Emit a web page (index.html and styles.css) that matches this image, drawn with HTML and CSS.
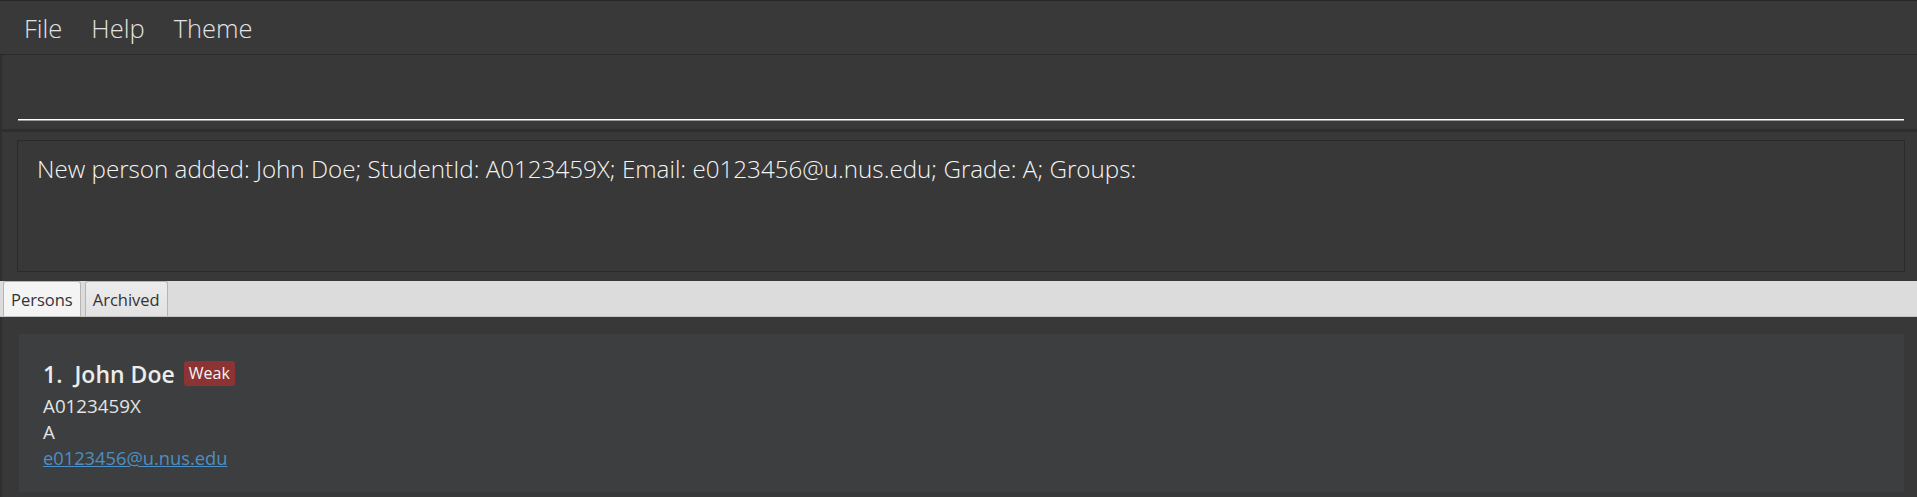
FILE: index.html
```html
<!DOCTYPE html>
<html>
<head>
<meta charset="utf-8">
<link rel="stylesheet" href="styles.css">
</head>
<body>
<div class="app">
  <div class="menubar">
    <span class="menu-item">File</span>
    <span class="menu-item">Help</span>
    <span class="menu-item">Theme</span>
  </div>
  <div class="command-box">
    <div class="command-field"></div>
  </div>
  <div class="result-pane">
    <div class="result-box">New person added: John Doe; StudentId: A0123459X; Email: e0123456@u.nus.edu; Grade: A; Groups:</div>
  </div>
  <div class="tab-header">
    <div class="tab tab-selected">Persons</div>
    <div class="tab">Archived</div>
  </div>
  <div class="tab-content">
    <div class="card">
      <div class="card-title">
        <span class="card-index">1.</span>
        <span class="card-name">John Doe</span>
        <span class="badge">Weak</span>
      </div>
      <div class="card-line">A0123459X</div>
      <div class="card-line">A</div>
      <a class="card-link">e0123456@u.nus.edu</a>
    </div>
  </div>
</div>
</body>
</html>
```
FILE: styles.css
```css
html, body {
  margin: 0;
  padding: 0;
  background: #383838;
  height: 100%;
  overflow: hidden;
}

.app {
  display: flex;
  flex-direction: column;
  height: 497px;
  font-family: "Open Sans", "Noto Sans", sans-serif;
}

.menubar {
  display: flex;
  align-items: center;
  height: 53px;
  border-top: 1px solid #262626;
  border-bottom: 1px solid #2b2b2b;
  background: #393939;
  padding-left: 9px;
}

.menu-item {
  padding: 0 14px 0 15px;
  color: #e2e2e2;
  font-size: 25.5px;
  font-weight: 300;
}

.command-box {
  display: flex;
  flex-direction: column;
  justify-content: flex-end;
  height: 74px;
  background: #383838;
  border-left: 2px solid #2f2f2f;
  padding: 0 13px 8px 16px;
  box-sizing: border-box;
}

.command-field {
  height: 1px;
  background: #ffffff;
  border-bottom: 1px solid #9a9a9a;
}

.result-pane {
  border-top: 3px solid #2e2e2e;
  background: #383838;
  padding: 8px 12px 9px 15px;
  border-left: 2px solid #2f2f2f;
}

.result-box {
  height: 132px;
  border: 1px solid #2a2a2a;
  box-sizing: border-box;
  padding: 12px 19px;
  color: #f4f4f4;
  font-size: 24.2px;
  font-weight: 300;
  line-height: 32px;
}

.tab-header {
  display: flex;
  align-items: flex-end;
  gap: 4px;
  height: 36px;
  background: #dcdcdc;
  padding-left: 3px;
  border-bottom: 1px solid #c4c4c4;
  box-sizing: border-box;
}

.tab {
  height: 35px;
  box-sizing: border-box;
  padding: 0 7px;
  display: flex;
  align-items: center;
  font-size: 16.5px;
  color: #333;
  background: linear-gradient(#ececec, #e2e2e2);
  border: 1px solid #b5b5b5;
  border-bottom: none;
  border-radius: 3px 3px 0 0;
}

.tab-selected {
  background: #f4f4f4;
}

.tab-content {
  flex: 1;
  background: #383838;
  border-left: 2px solid #2f2f2f;
  padding: 17px 13px 0 17px;
}

.card {
  background: #3c3e3f;
  height: 158px;
  box-sizing: border-box;
  padding: 27px 24px 0;
}

.card-title {
  display: flex;
  align-items: center;
  height: 25px;
  margin-bottom: 7px;
}

.card-index,
.card-name {
  color: #ececec;
  font-size: 23px;
  font-weight: 600;
}

.card-index {
  margin-right: 12px;
}

.badge {
  margin-left: 9px;
  background: #8c3333;
  color: #f4f4f4;
  font-size: 16px;
  border-radius: 3px;
  padding: 0 5px;
  height: 25px;
  line-height: 25px;
}

.card-line {
  color: #e4e4e4;
  font-size: 18.8px;
  line-height: 26px;
}

.card-link {
  display: block;
  color: #4d8fc4;
  text-decoration: underline;
  font-size: 18.3px;
  line-height: 26px;
}
```
